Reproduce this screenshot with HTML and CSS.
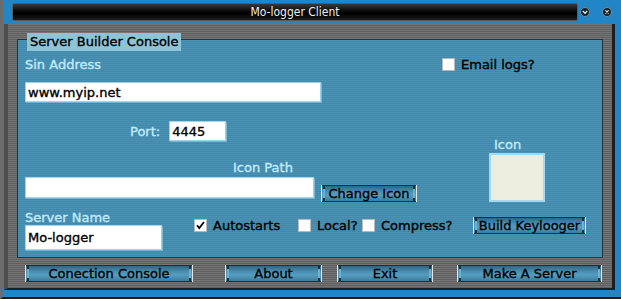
FILE: index.html
```html
<!DOCTYPE html>
<html lang="en">
<head>
    <meta charset="UTF-8">
    <meta name="viewport" content="width=device-width, initial-scale=1.0">
    <title>Mo-logger Client</title>
    <link rel="stylesheet" href="styles.css">
</head>
<body>
    <div class="window">
        <div class="titlebar">
            <div class="caption">Mo-logger Client</div>
            <span class="tb-btn tb-min">
                <svg width="10" height="10" viewBox="0 0 10 10">
                    <circle cx="5" cy="5" r="4.5" fill="#16232d" stroke="#6f8ea2" stroke-width="1"/>
                    <path d="M2.8 4 L5 6.3 L7.2 4" fill="none" stroke="#dfeaf0" stroke-width="1.3"/>
                </svg>
            </span>
            <span class="tb-btn tb-close">
                <svg width="10" height="10" viewBox="0 0 10 10">
                    <circle cx="5" cy="5" r="4.5" fill="#16232d" stroke="#6f8ea2" stroke-width="1"/>
                    <path d="M3.4 3.4 L6.6 6.6 M6.6 3.4 L3.4 6.6" fill="none" stroke="#dfeaf0" stroke-width="1.1"/>
                </svg>
            </span>
        </div>

        <div class="frame">
            <div class="panel">
                <div class="legend">Server Builder Console</div>

                <div class="form">
                    <span class="lbl sin-label">Sin Address</span>
                    <div class="check email-check"><span class="box"></span>Email logs?</div>

                    <input type="text" class="field addr" value="www.myip.net">

                    <div class="port-row">
                        <span class="lbl">Port:</span>
                        <input type="text" class="field port" value="4445">
                    </div>

                    <div class="icon-group">
                        <span class="lbl icon-label">Icon</span>
                        <div class="icon-box"></div>
                    </div>

                    <div class="path-group">
                        <span class="lbl path-label">Icon Path</span>
                        <div class="path-line">
                            <input type="text" class="field path" value="">
                            <button class="btn change-btn">Change Icon</button>
                        </div>
                    </div>

                    <div class="bottom-row">
                        <div class="name-group">
                            <span class="lbl">Server Name</span>
                            <input type="text" class="field name" value="Mo-logger">
                        </div>
                        <div class="check auto-check">
                            <span class="box">
                                <svg width="11" height="11" viewBox="0 0 11 11">
                                    <path d="M2 5.2 L4.3 8 L9 2" fill="none" stroke="#000" stroke-width="1.8"/>
                                </svg>
                            </span>Autostarts
                        </div>
                        <div class="check local-check"><span class="box"></span>Local?</div>
                        <div class="check compress-check"><span class="box"></span>Compress?</div>
                        <button class="btn build-btn">Build Keylooger</button>
                    </div>
                </div>
            </div>

            <div class="btn-row">
                <button class="btn conn-btn">Conection Console</button>
                <button class="btn about-btn">About</button>
                <button class="btn exit-btn">Exit</button>
                <button class="btn make-btn">Make A Server</button>
            </div>
        </div>
    </div>
</body>
</html>
```

FILE: styles.css
```css
body {
    margin: 0;
    background: #2a2a2a;
    font-family: "DejaVu Sans", Verdana, sans-serif;
    font-size: 13px;
}

.window {
    width: 621px;
    height: 299px;
    box-sizing: border-box;
    background: #2286c6;
    border-left: 3px solid #6c6c6c;
    border-bottom: 2px solid #1b1b1b;
    display: flex;
    flex-direction: column;
    overflow: hidden;
}

/* title bar */
.titlebar {
    height: 24px;
    flex: none;
    display: flex;
    align-items: center;
    padding-left: 9px;
    box-sizing: border-box;
}

.caption {
    width: 566px;
    height: 18px;
    box-sizing: border-box;
    border: 1px solid #505c64;
    border-radius: 2px;
    background: linear-gradient(#3a3a3a, #0a0a0a 45%, #000 60%, #1c1c1c);
    color: #eeeeee;
    font-family: "Liberation Sans Narrow", "DejaVu Sans Condensed", sans-serif;
    font-size: 12px;
    line-height: 16px;
    text-align: center;
}

.tb-btn {
    display: flex;
    width: 10px;
    height: 10px;
}

.tb-min {
    margin-left: 2px;
}

.tb-close {
    margin-left: 12px;
}

/* grey frame */
.frame {
    flex: none;
    height: 266px;
    box-sizing: border-box;
    margin: 0 6px 0 1px;
    border-left: 4px solid #4d4d4d;
    border-right: 3px solid #1e1e1e;
    border-bottom: 2px solid #1e1e1e;
    background: repeating-linear-gradient(#767676 0 1px, #5e5e5e 1px 2px);
    padding: 15px 9px 0 9px;
    -webkit-text-stroke: 0.35px currentColor;
}

.panel {
    height: 219px;
    box-sizing: border-box;
    border: 1px solid #24343e;
    background: repeating-linear-gradient(#4b93b5 0 1px, #4288aa 1px 2px);
    padding: 0 8px 0 7px;
}

.legend {
    width: fit-content;
    height: 18px;
    margin: -7px 0 0 2px;
    padding: 0 3px;
    background: #8fc3d6;
    color: #000;
    line-height: 18px;
}

.form {
    display: grid;
    grid-template-columns: 417px 1fr;
    align-items: start;
    padding-top: 5px;
}

.lbl {
    color: #c4ebfb;
    line-height: 17px;
}

.field {
    box-sizing: border-box;
    margin: 0;
    border: 1px solid #9fd4ee;
    box-shadow: 1px 1px 0 #78b6d4;
    background: #fff;
    color: #000;
    font-family: "DejaVu Sans", Verdana, sans-serif;
    font-size: 13px;
    padding: 0 2px;
    outline: none;
    -webkit-text-stroke: 0.35px #000;
}

.check {
    display: flex;
    align-items: center;
    gap: 6px;
    color: #000;
    height: 17px;
}

.box {
    display: flex;
    align-items: center;
    justify-content: center;
    width: 13px;
    height: 13px;
    box-sizing: border-box;
    border: 1px solid #b8b8b8;
    background: #fff;
    flex: none;
}

/* rows */
.addr {
    grid-column: 1;
    width: 296px;
    height: 20px;
    margin-top: 9px;
}

.port-row {
    grid-column: 1;
    grid-row: 3;
    display: flex;
    align-items: center;
    gap: 9px;
    margin: 19px 0 0 105px;
}

.port {
    width: 57px;
    height: 20px;
}

.icon-group {
    grid-column: 2;
    grid-row: 3 / 5;
    align-self: end;
    display: flex;
    flex-direction: column;
    margin-left: 47px;
}

.icon-label {
    line-height: 15px;
    padding-left: 5px;
}

.icon-box {
    width: 56px;
    height: 49px;
    margin-top: 1px;
    box-sizing: border-box;
    border: 2px solid #a6d8f0;
    background: #ecedde;
}

.path-group {
    grid-column: 1;
    grid-row: 4;
    margin-top: 19px;
}

.path-label {
    display: block;
    line-height: 15px;
    margin-left: 208px;
}

.path-line {
    display: flex;
    align-items: flex-start;
    margin-top: 2px;
}

.path {
    width: 289px;
    height: 21px;
}

.change-btn {
    width: 96px;
    margin: 8px 0 0 7px;
}

.bottom-row {
    grid-column: 1 / -1;
    display: flex;
    align-items: flex-start;
    margin-top: 8px;
}

.name-group {
    display: flex;
    flex-direction: column;
    width: 137px;
}

.name-group .lbl {
    line-height: 15px;
}

.name {
    width: 137px;
    height: 25px;
}

.bottom-row .check {
    height: 13px;
    margin-top: 9px;
}

.auto-check {
    width: 104px;
    margin-left: 32px;
}

.local-check {
    width: 64px;
}

.compress-check {
    width: 111px;
}

.build-btn {
    width: 113px;
    margin-top: 7px;
}

/* buttons */
.btn {
    position: relative;
    height: 17px;
    box-sizing: border-box;
    border: 1px solid #1a2f3a;
    background: linear-gradient(#2f6686, #4c90b3 40%, #569dc0 60%, #3c7c9c);
    color: #000;
    font-family: "DejaVu Sans", Verdana, sans-serif;
    font-size: 13px;
    line-height: 15px;
    padding: 0;
    -webkit-text-stroke: 0.35px #000;
}

.btn::before,
.btn::after {
    content: "";
    position: absolute;
    top: -1px;
    bottom: -1px;
    width: 3px;
    border-left: 1px solid #e4e4e4;
    background: linear-gradient(#1a2f3a 0 4px, #6fb0cc 4px calc(100% - 4px), #1a2f3a calc(100% - 4px));
    background-size: 2px 100%;
    background-repeat: no-repeat;
    background-position: 1px 0;
}

.btn::before {
    left: -1px;
}

.btn::after {
    right: -1px;
    border-left: none;
    border-right: 1px solid #e4e4e4;
    background-position: 0 0;
}

.btn-row {
    display: flex;
    margin-top: 7px;
    padding-left: 8px;
}

.conn-btn {
    width: 168px;
}

.about-btn {
    width: 97px;
    margin-left: 32px;
}

.exit-btn {
    width: 96px;
    margin-left: 15px;
}

.make-btn {
    width: 145px;
    margin-left: 24px;
}
```
